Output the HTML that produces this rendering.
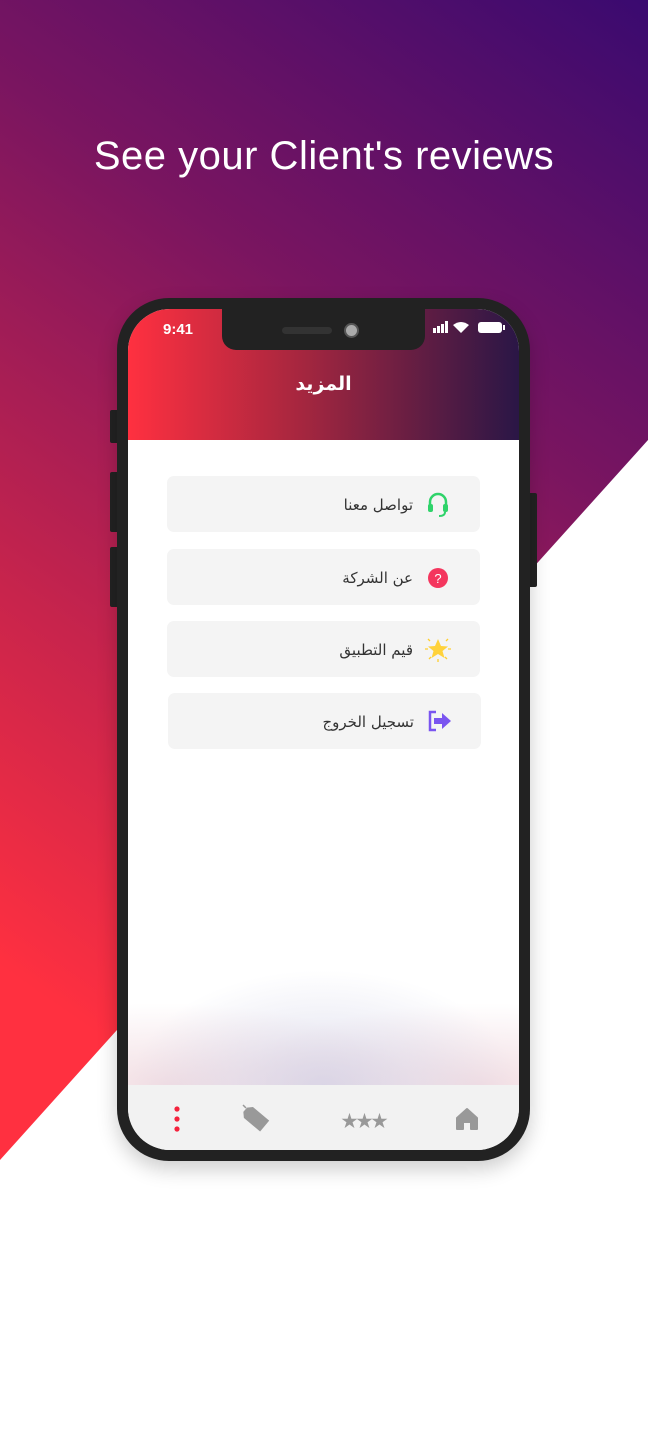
<!DOCTYPE html>
<html><head><meta charset="utf-8"><style>
*{margin:0;padding:0;box-sizing:border-box}
html,body{width:648px;height:1440px;overflow:hidden;background:#fff}
body{position:relative;font-family:"Liberation Sans","Noto Sans CJK SC",sans-serif}
.bg{position:absolute;left:0;top:0;width:648px;height:1440px;background:linear-gradient(215deg,#3a0a70 0%,#7a1560 28%,#c8244c 55%,#ff3040 75%);clip-path:polygon(0 0,648px 0,648px 440px,0 1160px)}
.title{position:absolute;top:134px;left:0;width:648px;text-align:center;color:#fff;font-size:40px;letter-spacing:0.5px}
.btn{position:absolute;background:#222;border-radius:2px}
.phone{position:absolute;left:117px;top:298px;width:413px;height:863px;background:#222;border-radius:52px;box-shadow:0 8px 20px rgba(0,0,0,.2)}
.screen{position:absolute;left:11px;top:11px;width:391px;height:841px;border-radius:42px;overflow:hidden;background:#fff}
.hdr{position:absolute;left:0;top:0;width:391px;height:131px;background:linear-gradient(90deg,#ff3040 0%,#a4263f 45%,#2a1646 100%)}
.notch{position:absolute;left:94px;top:0;width:203px;height:41px;background:#222;border-radius:0 0 14px 14px}
.time{position:absolute;left:35px;top:12px;color:#fff;font-size:15px;font-weight:bold}
.h{position:absolute;top:64px;width:391px;text-align:center;color:#fff;font-size:19px;font-weight:bold;font-family:"DejaVu Sans",sans-serif}
.item{position:absolute;left:39px;width:313px;height:56px;background:#f4f4f4;border-radius:7px}
.item span{position:absolute;right:67px;top:20px;font-size:15px;color:#333;direction:rtl;font-family:"DejaVu Sans",sans-serif}
.item svg{position:absolute;left:257px;top:14px}
.fade{position:absolute;left:0;top:660px;width:391px;height:116px;background:radial-gradient(ellipse at 50% 100%,rgba(200,200,225,.6),rgba(255,255,255,0) 70%),radial-gradient(ellipse at 10% 100%,rgba(230,190,200,.5),rgba(255,255,255,0) 50%),radial-gradient(ellipse at 90% 100%,rgba(230,190,200,.5),rgba(255,255,255,0) 50%)}
.nav{position:absolute;left:0;top:776px;width:391px;height:65px;background:#f2f2f2}
</style></head><body>
<div class="bg"></div>
<div class="title">See your Client's reviews</div>
<div class="btn" style="left:110px;top:410px;width:9px;height:33px"></div>
<div class="btn" style="left:110px;top:472px;width:9px;height:60px"></div>
<div class="btn" style="left:110px;top:547px;width:9px;height:60px"></div>
<div class="btn" style="left:528px;top:493px;width:9px;height:94px"></div>
<div class="phone"><div class="screen">
<div class="hdr"></div>
<div class="notch"><div style="position:absolute;left:60px;top:18px;width:50px;height:7px;border-radius:4px;background:#333"></div><div style="position:absolute;left:122px;top:14px;width:15px;height:15px;border-radius:50%;background:#aaa;border:2px solid #555"></div></div>
<div class="time">9:41</div>
<svg style="position:absolute;left:305px;top:11px" width="72" height="14"><rect x="0" y="8" width="3" height="5" fill="#fff"/><rect x="4" y="6" width="3" height="7" fill="#fff"/><rect x="8" y="4" width="3" height="9" fill="#fff"/><rect x="12" y="1" width="3" height="12" fill="#fff"/><path d="M20 5 Q28 -1 36 5 L28 13Z" fill="#fff"/><rect x="45" y="2" width="24" height="11" rx="3" fill="#fff"/><rect x="70" y="5" width="2" height="5" fill="#fff"/></svg>
<div class="h">المزيد</div>
<div class="item" style="top:167px"><span>تواصل معنا</span><svg width="28" height="28" viewBox="0 0 28 28"><path d="M6 16 V12 a8 8 0 0 1 16 0 V16" stroke="#2fd36a" stroke-width="2.5" fill="none"/><rect x="4" y="14" width="5" height="8" rx="2" fill="#2fd36a"/><rect x="19" y="14" width="5" height="8" rx="2" fill="#2fd36a"/><path d="M21 22 q0 4 -6 4" stroke="#2fd36a" stroke-width="2" fill="none"/></svg></div>
<div class="item" style="top:240px"><span>عن الشركة</span><svg width="28" height="28" viewBox="0 0 28 28"><circle cx="14" cy="15" r="10" fill="#f4365e"/><text x="14" y="20" font-size="13" fill="#fff" text-anchor="middle" font-family="Liberation Sans">?</text></svg></div>
<div class="item" style="top:312px"><span>قيم التطبيق</span><svg width="32" height="32" viewBox="0 0 32 32" style="left:255px;top:12px"><path d="M16 6 L19 13 L26 13.5 L20.5 18 L22.5 25 L16 21 L9.5 25 L11.5 18 L6 13.5 L13 13Z" fill="#ffd23a"/><path d="M3 16h3M26 16h3M16 29v-3M6 6l2 2M26 6l-2 2M7 26l2-2M25 26l-2-2" stroke="#ffcf30" stroke-width="1.3"/></svg></div>
<div class="item" style="top:384px;left:40px"><span>تسجيل الخروج</span><svg width="30" height="28" viewBox="0 0 30 28"><path d="M11 5 H5 V23 H11" stroke="#7a55f0" stroke-width="2.5" fill="none"/><path d="M9 11 H17 V6 L26 14 L17 22 V17 H9Z" fill="#7a55f0"/></svg></div>
<div class="fade"></div>
<div class="nav">
<svg style="position:absolute;left:45px;top:20px" width="8" height="30"><circle cx="4" cy="4" r="2.6" fill="#f4233d"/><circle cx="4" cy="14" r="2.6" fill="#f4233d"/><circle cx="4" cy="24" r="2.6" fill="#f4233d"/></svg>
<svg style="position:absolute;left:108px;top:16px" width="36" height="36" viewBox="0 0 36 36"><path d="M7 4 L10 7" stroke="#999" stroke-width="1.5"/><path d="M12 6 L18 6 L33 21 L23 31 L8 16 L8 10Z" fill="#999" transform="rotate(-5 18 18)"/></svg>
<div style="position:absolute;left:213px;top:22px;font-size:17px;color:#999;letter-spacing:-2px">★★★</div>
<svg style="position:absolute;left:327px;top:22px" width="24" height="24" viewBox="0 0 24 24"><path d="M2 11 L12 2 L22 11 V22 H16 V15 H8 V22 H2Z" fill="#999" stroke="#999" stroke-linejoin="round" stroke-width="2"/></svg>
</div>
</div></div>
</body></html>
